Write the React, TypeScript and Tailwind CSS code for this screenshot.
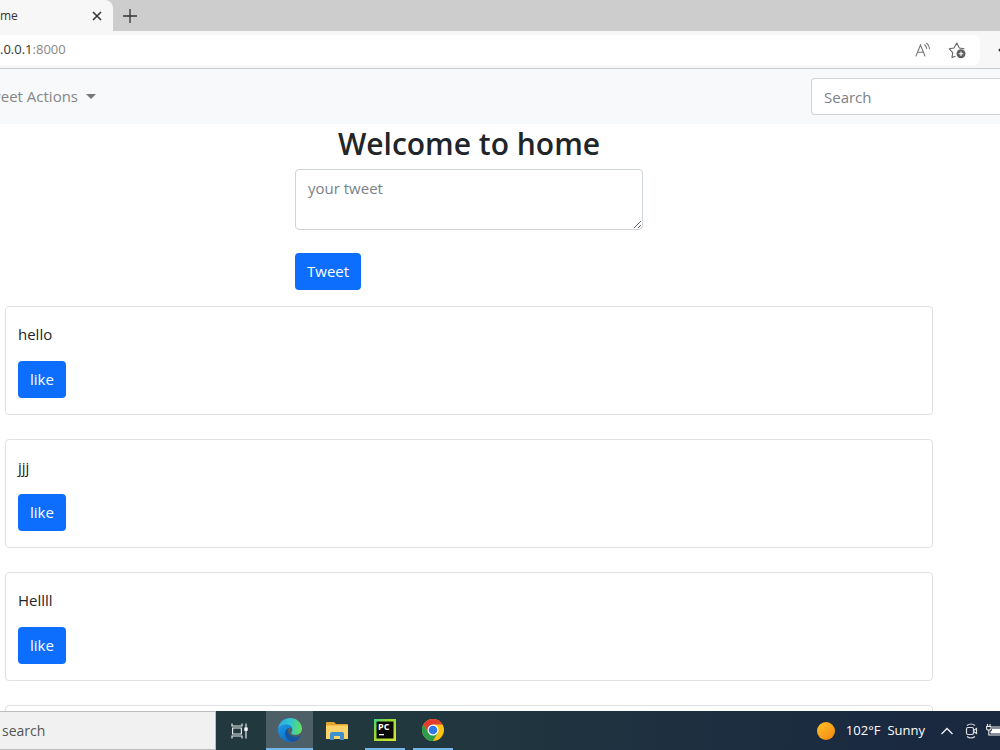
import { useState } from "react";

const tweets = [
  { id: 1, text: "hello" },
  { id: 2, text: "jjj" },
  { id: 3, text: "Hellll" },
];

function TabBar() {
  return (
    <div className="flex h-[31px] shrink-0 bg-[#cdcdcd]">
      <div className="flex w-[113px] items-center justify-between rounded-tr-lg bg-[#f7f7f7] pr-[11px]">
        <span className="text-xs text-[#333]">me</span>
        <button aria-label="Close tab">
          <svg width="10" height="10" viewBox="0 0 10 10" stroke="#333" strokeWidth="1.6">
            <path d="M1 1l8 8M9 1L1 9" />
          </svg>
        </button>
      </div>
      <button aria-label="New tab" className="flex w-[34px] items-center justify-center">
        <svg width="14" height="14" viewBox="0 0 14 14" stroke="#333" strokeWidth="1.3">
          <path d="M7 0v14M0 7h14" />
        </svg>
      </button>
    </div>
  );
}

function AddressBar() {
  return (
    <div className="flex h-[38px] shrink-0 items-center border-b border-[#c8cacb] bg-[#f7f7f7]">
      <div className="flex h-[30px] flex-1 items-center rounded-r-md bg-white pr-[13px]">
        <span className="flex-1 text-[13px] text-[#333]">
          .0.0.1<span className="text-[#888]">:8000</span>
        </span>
        <button aria-label="Read aloud" className="mr-4">
          <svg width="18" height="18" viewBox="0 0 18 18" fill="none" stroke="#777" strokeWidth="1.1" strokeLinecap="round">
            <path d="M2 15L6.500 4L11 15M3.600 11.200h5.800" />
            <path d="M10.600 3.800q1.800 1.300 2 3.700M12.600 2.300q2.500 1.700 2.900 5.400" />
          </svg>
        </button>
        <button aria-label="Add to favorites">
          <svg width="19" height="18" viewBox="0 0 19 18" fill="none" stroke="#666" strokeWidth="1.1" strokeLinejoin="round">
            <path d="M7.500 15.200L4 16.600L4.700 11.600L1.200 7.800L6 7L8.800 2L11.300 7L16.400 7.700" />
            <circle cx="13" cy="12.800" r="4.500" fill="#5f5f5f" stroke="none" />
            <path d="M13 10.500v4.600M10.700 12.800h4.600" stroke="#fff" />
          </svg>
        </button>
      </div>
      <button aria-label="More" className="flex w-5 justify-end">
        <svg width="2" height="4" viewBox="0 0 2 4" fill="#333">
          <circle cx="2" cy="2" r="1.500" />
        </svg>
      </button>
    </div>
  );
}

function Navbar() {
  return (
    <nav className="flex h-[55px] shrink-0 items-center justify-between bg-[#f8f9fa]">
      <button className="flex items-center gap-2 text-[15px] text-[#858687]">
        <span className="flex w-[78px] justify-end overflow-hidden whitespace-nowrap">weet Actions</span>
        <svg width="10" height="5" viewBox="0 0 10 5" fill="#777">
          <path d="M0 0h10L5 5z" />
        </svg>
      </button>
      <input
        type="search"
        aria-label="Search"
        placeholder="Search"
        className="h-[37px] w-[189px] rounded-l border border-r-0 border-[#ced4da] bg-white px-3 text-[15px] placeholder:text-[#7a8188]"
      />
    </nav>
  );
}

function TweetForm() {
  const [value, setValue] = useState("");

  return (
    <form className="mx-auto w-[348px]" onSubmit={(e) => e.preventDefault()}>
      <textarea
        aria-label="your tweet"
        placeholder="your tweet"
        value={value}
        onChange={(e) => setValue(e.target.value)}
        className="block h-[61px] w-full rounded border border-[#ced4da] px-3 py-[6px] text-[15px] leading-6 placeholder:text-[#7a8188]"
      />
      <button type="submit" className="mt-[23px] block h-[37px] rounded bg-[#0d6efd] px-3 text-[15px] text-white">
        Tweet
      </button>
    </form>
  );
}

function TweetCard({ text }: { text: string }) {
  return (
    <article className="rounded border border-[#dfe1e3] px-3 pb-4 pt-[15px]">
      <p className="text-[15px] leading-6">{text}</p>
      <button className="mt-[15px] block h-[37px] rounded bg-[#0d6efd] px-3 text-[15px] text-white">
        like
      </button>
    </article>
  );
}

function TaskViewIcon() {
  return (
    <svg width="17" height="16" viewBox="0 0 17 16" fill="none" stroke="#e4e8ea" strokeWidth="1.200">
      <path d="M1 .5v2.500h10V.500M1 15.500v-2.500h10v2.500M1.600 5h8.800v6H1.600z" />
      <path d="M15 .5v15" />
      <path d="M13.300 4.500h3.400v3.400h-3.400z" fill="#fff" stroke="none" />
    </svg>
  );
}

function EdgeIcon() {
  return (
    <svg width="24" height="24" viewBox="0 0 24 24">
      <defs>
        <linearGradient id="edge-top" x1="0" y1="0.300" x2="1" y2="0.400">
          <stop offset="0" stopColor="#2ba7e8" />
          <stop offset="0.500" stopColor="#30c6d0" />
          <stop offset="1" stopColor="#62df5d" />
        </linearGradient>
        <linearGradient id="edge-left" x1="0" y1="0" x2="0.600" y2="1">
          <stop offset="0" stopColor="#1c9be6" />
          <stop offset="1" stopColor="#0f6cc4" />
        </linearGradient>
      </defs>
      <path d="M0 12C0 5.400 5.400 0 12 0s12 5 12 10.500c0 4-3 6.300-6.500 6.300-3 0-4.200-1-4.200-1.900 0-.7 1-1.200 1-3.200 0-2.700-2.500-4.900-6-4.900C4.500 6.800 1 9 0 12z" fill="url(#edge-top)" />
      <path d="M0 12.200C.4 9 4 6.800 8 6.800c3.700 0 6.400 2 6.400 4.800-.7-1.300-2-1.800-3.200-1.600-2.600.4-4 2.700-4 5.500 0 4.200 3 7.600 7.300 8.200C6.800 25.400 0 19.400 0 12.200z" fill="url(#edge-left)" />
      <path d="M7.200 15.500c0-2.900 1.500-4.900 3.600-5.500-1 1.200-1.300 2.600-.8 4.200 1 3.200 4.300 4.600 7.600 4.600 1.700 0 3.300-.5 4.500-1.100.4-.2.700.1.500.5-1.700 3.200-4.600 5.400-8.100 5.500-4.300-.5-7.300-4-7.300-8.200z" fill="#1556a3" />
    </svg>
  );
}

function FolderIcon() {
  return (
    <svg width="22" height="18" viewBox="0 0 22 18">
      <path d="M0 1q0-1 1-1h7l2 2h11q1 0 1 1v14H0z" fill="#e5a52d" />
      <path d="M0 3.500h22V17H0z" fill="#fcd36b" />
      <path d="M4 18v-6q0-2 2-2h10q2 0 2 2v6h-4v-4H8v4z" fill="#3d91ce" />
    </svg>
  );
}

function PyCharmIcon() {
  return (
    <svg width="22" height="22" viewBox="0 0 22 22">
      <defs>
        <linearGradient id="pycharm" x1="0" y1="0" x2="1" y2="1">
          <stop offset="0" stopColor="#35d88d" />
          <stop offset="0.300" stopColor="#8fd63c" />
          <stop offset="1" stopColor="#d9e82f" />
        </linearGradient>
      </defs>
      <path d="M0 0h22v22H0z" fill="url(#pycharm)" />
      <path d="M2.500 2.500h17v17h-17z" fill="#080808" />
      <text x="4" y="11" fontSize="9" fontWeight="700" fill="#fff" fontFamily="Open Sans, sans-serif">PC</text>
      <path d="M5 15h5v1.300H5z" fill="#fff" />
    </svg>
  );
}

function ChromeIcon() {
  return (
    <svg width="22" height="22" viewBox="0 0 22 22">
      <circle cx="11" cy="11" r="11" fill="#fbc116" />
      <path d="M1.470 5.500A11 11 0 0 1 20.530 5.500H11L6.240 13.750z" fill="#e33b2e" />
      <path d="M1.470 5.500A11 11 0 0 0 11 22L15.760 13.750H6.240z" fill="#2c9e4b" />
      <circle cx="11" cy="11" r="5.500" fill="#fff" />
      <circle cx="11" cy="11" r="4.300" fill="#3078e8" />
    </svg>
  );
}

function Taskbar() {
  return (
    <footer className="flex h-[39px] shrink-0 bg-linear-to-r from-[#22383f] from-40% to-[#1a2940] to-90% text-[13px] text-white">
      <input
        type="text"
        aria-label="Taskbar search"
        placeholder="search"
        className="w-[216px] border-y border-r border-[#bdbdbd] bg-[#f1f1f1] pl-[2px] text-sm placeholder:text-[#555]"
      />
      <button aria-label="Task view" className="flex w-[50px] items-center justify-center pr-1">
        <TaskViewIcon />
      </button>
      <button aria-label="Edge" className="flex w-[47px] items-center justify-center border-b-2 border-[#76b5e8] bg-[#4e6067]">
        <EdgeIcon />
      </button>
      <button aria-label="File Explorer" className="flex w-12 items-center justify-center">
        <FolderIcon />
      </button>
      <button aria-label="PyCharm" className="mx-1 flex w-10 items-center justify-center border-b-2 border-[#76b5e8]">
        <PyCharmIcon />
      </button>
      <button aria-label="Chrome" className="mx-1 flex w-10 items-center justify-center border-b-2 border-[#76b5e8]">
        <ChromeIcon />
      </button>
      <div className="ml-auto flex items-center">
        <button className="mr-4 flex items-center gap-[11px]">
          <svg width="18" height="18" viewBox="0 0 18 18">
            <defs>
              <linearGradient id="sun" x1="0" y1="0" x2="1" y2="1">
                <stop offset="0" stopColor="#fdc32a" />
                <stop offset="1" stopColor="#f5850f" />
              </linearGradient>
            </defs>
            <circle cx="9" cy="9" r="9" fill="url(#sun)" />
          </svg>
          <span className="flex gap-[7px]">
            <span>102°F</span>
            <span>Sunny</span>
          </span>
        </button>
        <button aria-label="Show hidden icons" className="mr-3">
          <svg width="12" height="8" viewBox="0 0 12 8" fill="none" stroke="#eee" strokeWidth="1.400">
            <path d="M.5 7L6 1.500L11.500 7" />
          </svg>
        </button>
        <button aria-label="Meet now" className="mr-2">
          <svg width="13" height="16" viewBox="0 0 13 16" fill="none" stroke="#ddd" strokeWidth="1.200">
            <path d="M2 2.500Q6 -.5 10 2.500M2 13.500Q6 16.500 10 13.500" />
            <rect x="1.500" y="4.500" width="7" height="7" rx="1.500" />
            <path d="M8.500 7.500l3-2v5l-3-2" />
          </svg>
        </button>
        <button aria-label="Battery">
          <svg width="14" height="13" viewBox="0 0 14 13" fill="none" stroke="#eee" strokeWidth="1.100">
            <path d="M1.500 0v2M4 0v2M.6 2.500h4.400v2q0 1.500-2.200 1.500t-2.200-1.500zM2.800 6v5h11.200M6 3h8" />
            <path d="M6 4.500h8v5H4.500V7.500L6 6.500z" fill="#fff" stroke="none" />
          </svg>
        </button>
      </div>
    </footer>
  );
}

export default function App() {
  return (
    <div className="flex h-screen flex-col overflow-hidden bg-white font-['Open_Sans',sans-serif] text-[#212529]">
      <TabBar />
      <AddressBar />
      <Navbar />

      {/* Page content */}
      <main className="min-h-0 flex-1 overflow-hidden pl-[5px] pr-[67px]">
        <h1 className="mb-[5px] text-center text-[30px] font-semibold leading-10">Welcome to home</h1>
        <TweetForm />
        <div className="mt-4 flex flex-col gap-6">
          {tweets.map((tweet) => (
            <TweetCard key={tweet.id} text={tweet.text} />
          ))}
          {/* placeholder for the next tweet */}
          <div className="h-[109px] rounded border border-[#dfe1e3]" />
        </div>
      </main>

      <Taskbar />
    </div>
  );
}
